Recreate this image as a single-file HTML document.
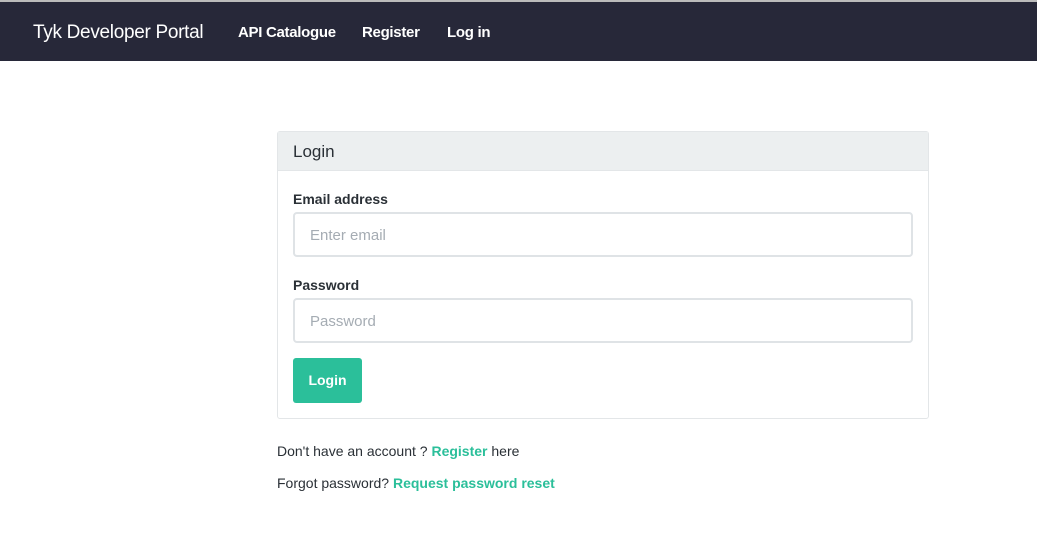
<!DOCTYPE html>
<html><head><style>
body{margin:0;background:#fff;font-family:"Liberation Sans",sans-serif;width:1037px;height:538px;overflow:hidden;position:relative}
.nav{position:absolute;left:0;top:0;width:1037px;height:61px;background:#272839;border-top:2px solid #bbb;box-sizing:border-box}
.nav span{position:absolute;color:#fff;top:22px;font-size:15px;font-weight:bold;letter-spacing:-0.3px}
.brand{font-size:19px!important;font-weight:normal!important;top:20px!important;letter-spacing:-0.5px}
.card{position:absolute;left:277px;top:131px;width:650px;height:286px;border:1px solid #e3e6e8;border-radius:3px}
.hd{height:38px;background:#eceff0;border-bottom:1px solid #e3e6e8;font-size:17px;color:#2a3036;padding-left:15px;line-height:39px}
.lbl{position:absolute;left:15px;font-size:14px;font-weight:bold;color:#2a3036}
.inp{position:absolute;left:15px;height:41px;border:2px solid #dfe3e6;border-radius:4px;color:#a5acb3;font-size:15px;line-height:44px;padding-left:15px;width:601px}
.btn{position:absolute;left:15px;top:226px;width:69px;height:45px;background:#2bbf9a;border-radius:3px;color:#fff;font-weight:bold;font-size:14px;text-align:center;line-height:45px}
.t{position:absolute;left:277px;font-size:14px;color:#2a3036}
.t b{color:#2bbf9a}
</style></head><body>
<div class="nav">
<span class="brand" style="left:33px">Tyk Developer Portal</span>
<span style="left:238px">API Catalogue</span>
<span style="left:362px">Register</span>
<span style="left:447px">Log in</span>
</div>
<div class="card">
<div class="hd">Login</div>
<div class="lbl" style="top:59px">Email address</div>
<div class="inp" style="top:80px">Enter email</div>
<div class="lbl" style="top:145px">Password</div>
<div class="inp" style="top:166px">Password</div>
<div class="btn">Login</div>
</div>
<div class="t" style="top:443px">Don't have an account ? <b>Register</b> here</div>
<div class="t" style="top:475px">Forgot password? <b>Request password reset</b></div>
</body></html>
